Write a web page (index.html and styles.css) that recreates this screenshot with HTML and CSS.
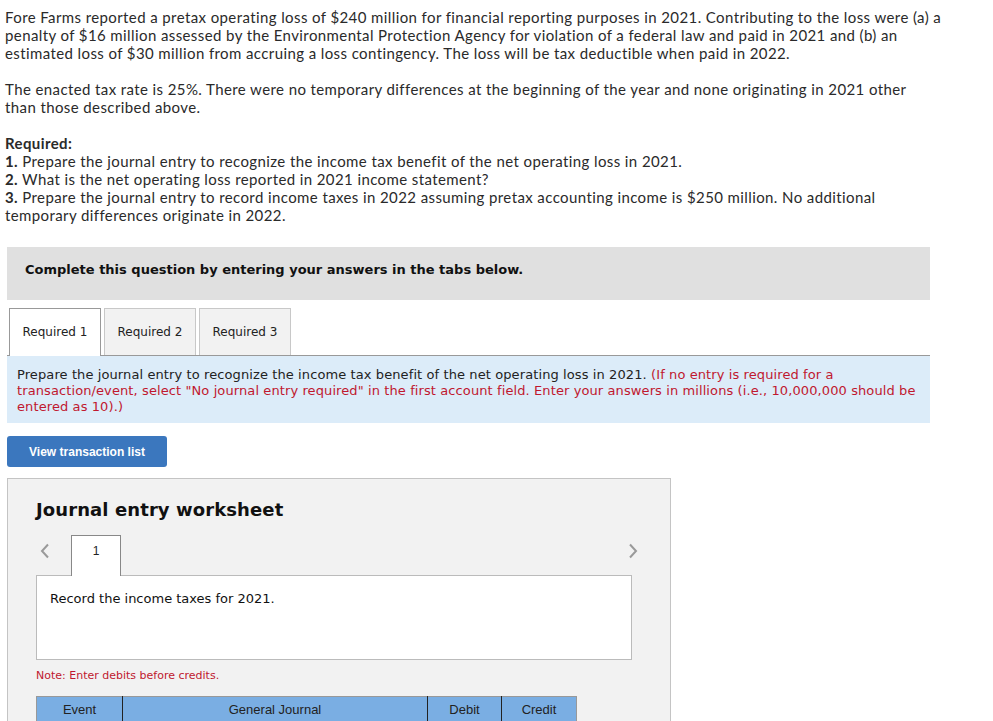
FILE: index.html
```html
<!DOCTYPE html>
<html lang="en">
<head>
    <meta charset="UTF-8">
    <meta name="viewport" content="width=device-width, initial-scale=1.0">
    <title>Fore Farms - Income Taxes</title>
    <link rel="stylesheet" href="styles.css">
</head>
<body>
    <!-- Question text -->
    <div class="intro">
        <p>Fore Farms reported a pretax operating loss of $240 million for financial reporting purposes in 2021. Contributing to the loss were (a) a<br>
        penalty of $16 million assessed by the Environmental Protection Agency for violation of a federal law and paid in 2021 and (b) an<br>
        estimated loss of $30 million from accruing a loss contingency. The loss will be tax deductible when paid in 2022.</p>
        <p>The enacted tax rate is 25%. There were no temporary differences at the beginning of the year and none originating in 2021 other<br>
        than those described above.</p>
        <p class="required">
            <strong>Required:</strong><br>
            <strong>1.</strong> Prepare the journal entry to recognize the income tax benefit of the net operating loss in 2021.<br>
            <strong>2.</strong> What is the net operating loss reported in 2021 income statement?<br>
            <strong>3.</strong> Prepare the journal entry to record income taxes in 2022 assuming pretax accounting income is $250 million. No additional<br>
            temporary differences originate in 2022.
        </p>
    </div>

    <div class="question">
        <div class="notice">Complete this question by entering your answers in the tabs below.</div>

        <!-- Tabs -->
        <div class="tabs">
            <div class="tab active">Required 1</div>
            <div class="tab">Required 2</div>
            <div class="tab">Required 3</div>
        </div>

        <div class="instructions">
            Prepare the journal entry to recognize the income tax benefit of the net operating loss in 2021.
            <span class="red">(If no entry is required for a transaction/event, select "No journal entry required" in the first account field. Enter your answers in millions (i.e., 10,000,000 should be entered as 10).)</span>
        </div>

        <button class="btn-list">View transaction list</button>

        <!-- Worksheet -->
        <div class="worksheet">
            <h2>Journal entry worksheet</h2>

            <div class="entry-nav">
                <span class="chevron">
                    <svg width="10" height="16" viewBox="0 0 10 16"><polyline points="8,1.5 2,8 8,14.5" fill="none" stroke="#9a9a9a" stroke-width="2"/></svg>
                </span>
                <div class="entry-tab">1</div>
                <span class="chevron right">
                    <svg width="10" height="16" viewBox="0 0 10 16"><polyline points="2,1.5 8,8 2,14.5" fill="none" stroke="#9a9a9a" stroke-width="2"/></svg>
                </span>
            </div>

            <div class="entry-box">Record the income taxes for 2021.</div>

            <p class="note">Note: Enter debits before credits.</p>

            <table class="journal">
                <tr>
                    <th class="col-event">Event</th>
                    <th class="col-journal">General Journal</th>
                    <th class="col-debit">Debit</th>
                    <th class="col-credit">Credit</th>
                </tr>
            </table>
        </div>
    </div>
</body>
</html>
```

FILE: styles.css
```css
/* General Reset */
body {
    margin: 0;
    padding: 0;
    background: #fff;
    color: #222;
}

/* Question text */
.intro {
    padding: 8px 0 0 5px;
    width: 970px;
    font-family: 'Lato', sans-serif;
    font-size: 15px;
    letter-spacing: 0.4px;
    line-height: 18px;
    color: #2a2a2a;
}

.intro p {
    margin: 0 0 18px 0;
}

.intro strong {
    font-weight: bold;
}

.intro .required {
    margin-bottom: 0;
}

/* Answer area */
.question {
    margin: 23px 0 0 7px;
    width: 923px;
    font-family: 'DejaVu Sans', Verdana, sans-serif;
}

.notice {
    background: #e0e0e0;
    height: 53px;
    box-sizing: border-box;
    padding: 15px 18px 0;
    font-size: 13px;
    line-height: 16px;
    font-weight: bold;
    color: #111;
}

/* Tabs */
.tabs {
    display: flex;
    gap: 3px;
    margin-top: 8px;
    padding-left: 2px;
    border-bottom: 1px solid #999;
}

.tab {
    width: 92px;
    height: 47px;
    box-sizing: border-box;
    border: 1px solid #c8c8c8;
    border-bottom: none;
    background: #f2f2f2;
    font-size: 12px;
    line-height: 47px;
    text-align: center;
    color: #222;
}

.tab.active {
    background: #fff;
    border-color: #999;
    height: 48px;
    margin-bottom: -1px;
}

.instructions {
    background: #dcecf9;
    padding: 11px 6px 8px 10px;
    font-size: 13px;
    letter-spacing: 0.1px;
    line-height: 16px;
    color: #222;
}

.red {
    color: #c0182f;
}

.btn-list {
    display: block;
    margin-top: 13px;
    width: 160px;
    height: 31px;
    border: none;
    border-radius: 3px;
    background: #3b77be;
    color: #fff;
    font-family: 'Liberation Sans', Arial, sans-serif;
    font-size: 12px;
    font-weight: bold;
    cursor: pointer;
}

/* Worksheet */
.worksheet {
    margin-top: 11px;
    width: 664px;
    height: 250px;
    box-sizing: border-box;
    background: #f2f2f2;
    border: 1px solid #c4c4c4;
    padding: 20px 38px 0 28px;
}

.worksheet h2 {
    margin: 0;
    font-size: 18px;
    letter-spacing: 0.1px;
    line-height: 22px;
    font-weight: bold;
    color: #111;
}

.entry-nav {
    display: flex;
    align-items: flex-start;
    margin-top: 14px;
    height: 40px;
}

.chevron {
    width: 35px;
    padding: 8px 0 0 4px;
    box-sizing: border-box;
}

.chevron.right {
    margin-left: auto;
    margin-right: -6px;
    width: auto;
    padding: 8px 0 0 0;
}

.entry-tab {
    width: 50px;
    height: 41px;
    box-sizing: border-box;
    background: #fff;
    border: 1px solid #888;
    border-bottom: none;
    font-family: 'Liberation Sans', Arial, sans-serif;
    font-size: 12px;
    text-align: center;
    padding-top: 8px;
    position: relative;
    z-index: 1;
}

.entry-box {
    background: #fff;
    border: 1px solid #bbb;
    height: 85px;
    box-sizing: border-box;
    padding: 15px 13px;
    font-size: 13px;
    line-height: 16px;
    color: #111;
}

.note {
    margin: 9px 0 0 0;
    font-size: 11px;
    line-height: 14px;
    color: #c0182f;
}

/* Journal table */
.journal {
    margin-top: 13px;
    border-collapse: collapse;
    width: 541px;
    font-family: 'Liberation Sans', Arial, sans-serif;
}

.journal th {
    background: #7aaee3;
    height: 24px;
    padding: 0;
    font-size: 13px;
    font-weight: normal;
    color: #222;
    border-top: 1px solid #999;
    border-left: 1px solid #222;
    border-right: 1px solid #222;
}

.journal th.col-event {
    width: 85px;
    border-left: 1px solid #999;
}

.journal th.col-journal {
    width: 304px;
}

.journal th.col-debit {
    width: 73px;
}

.journal th.col-credit {
    border-right: 1px solid #999;
}
```
